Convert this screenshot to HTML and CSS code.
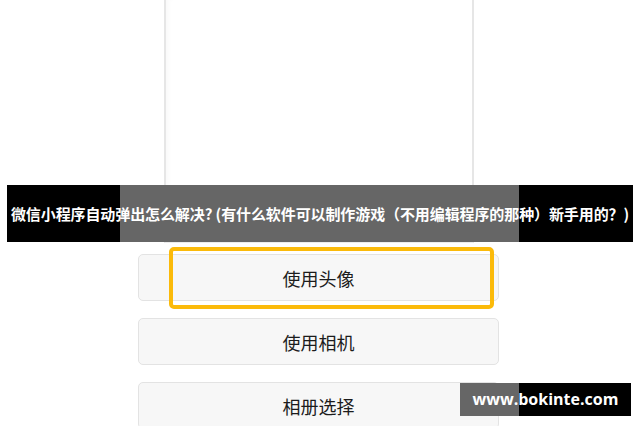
FILE: index.html
```html
<!DOCTYPE html>
<html lang="zh-CN">
<head>
  <meta charset="UTF-8">
  <meta name="viewport" content="width=device-width, initial-scale=1.0">
  <title>微信小程序自动弹出怎么解决</title>
  <link rel="stylesheet" href="styles.css">
</head>
<body>
  <div class="screen">
    <div class="preview"></div>
    <div class="actions">
      <div class="action-item">
        <button class="action-btn">使用头像</button>
        <div class="focus-ring"></div>
      </div>
      <div class="action-item">
        <button class="action-btn">使用相机</button>
      </div>
      <div class="action-item">
        <button class="action-btn">相册选择</button>
      </div>
    </div>
  </div>

  <div class="caption">微信小程序自动弹出怎么解决? (有什么软件可以制作游戏（不用编辑程序的那种）新手用的？)</div>
  <div class="watermark">www.bokinte.com</div>
</body>
</html>
```

FILE: styles.css
```css
body {
  font-family: 'Noto Sans CJK SC', 'Noto Sans', sans-serif;
  background-color: #fff;
  margin: 0;
  padding: 0;
  width: 640px;
  height: 426px;
  overflow: hidden;
  position: relative;
}
.screen {
  display: flex;
  flex-direction: column;
}
.preview {
  width: 306px;
  height: 242px;
  margin-left: 164px;
  border-left: 2px solid #e6e6e6;
  border-right: 2px solid #e6e6e6;
  border-bottom: 1px solid #ececec;
  box-shadow: inset 5px 0 6px -4px rgba(0, 0, 0, 0.04);
}
.actions {
  display: flex;
  flex-direction: column;
  gap: 17px;
  width: 361px;
  margin: 11px 0 0 138px;
}
.action-item {
  position: relative;
}
.action-btn {
  display: block;
  width: 100%;
  height: 47px;
  background-color: #f7f7f7;
  border: 1px solid #e3e3e3;
  border-radius: 5px;
  font-family: inherit;
  font-size: 18px;
  color: #1c1c1c;
  padding: 0;
}
.focus-ring {
  position: absolute;
  left: 31px;
  top: -7px;
  width: 317px;
  height: 54px;
  border: 4px solid #fbba0a;
  border-radius: 5px;
}
.caption {
  position: absolute;
  left: 7px;
  top: 185px;
  width: 626px;
  height: 57px;
  line-height: 57px;
  background: linear-gradient(to right, #000 113px, #666 113px, #666 512px, #000 512px);
  color: #fff;
  font-size: 15px;
  font-weight: 700;
  text-align: center;
  white-space: nowrap;
  overflow: hidden;
  letter-spacing: -0.1px;
}
.watermark {
  position: absolute;
  left: 460px;
  top: 383px;
  width: 171px;
  height: 33px;
  line-height: 33px;
  background: linear-gradient(to right, #666 59px, #000 59px);
  color: #fff;
  font-family: 'Open Sans', 'Liberation Sans', sans-serif;
  font-size: 16px;
  font-weight: 700;
  text-align: center;
}
```
